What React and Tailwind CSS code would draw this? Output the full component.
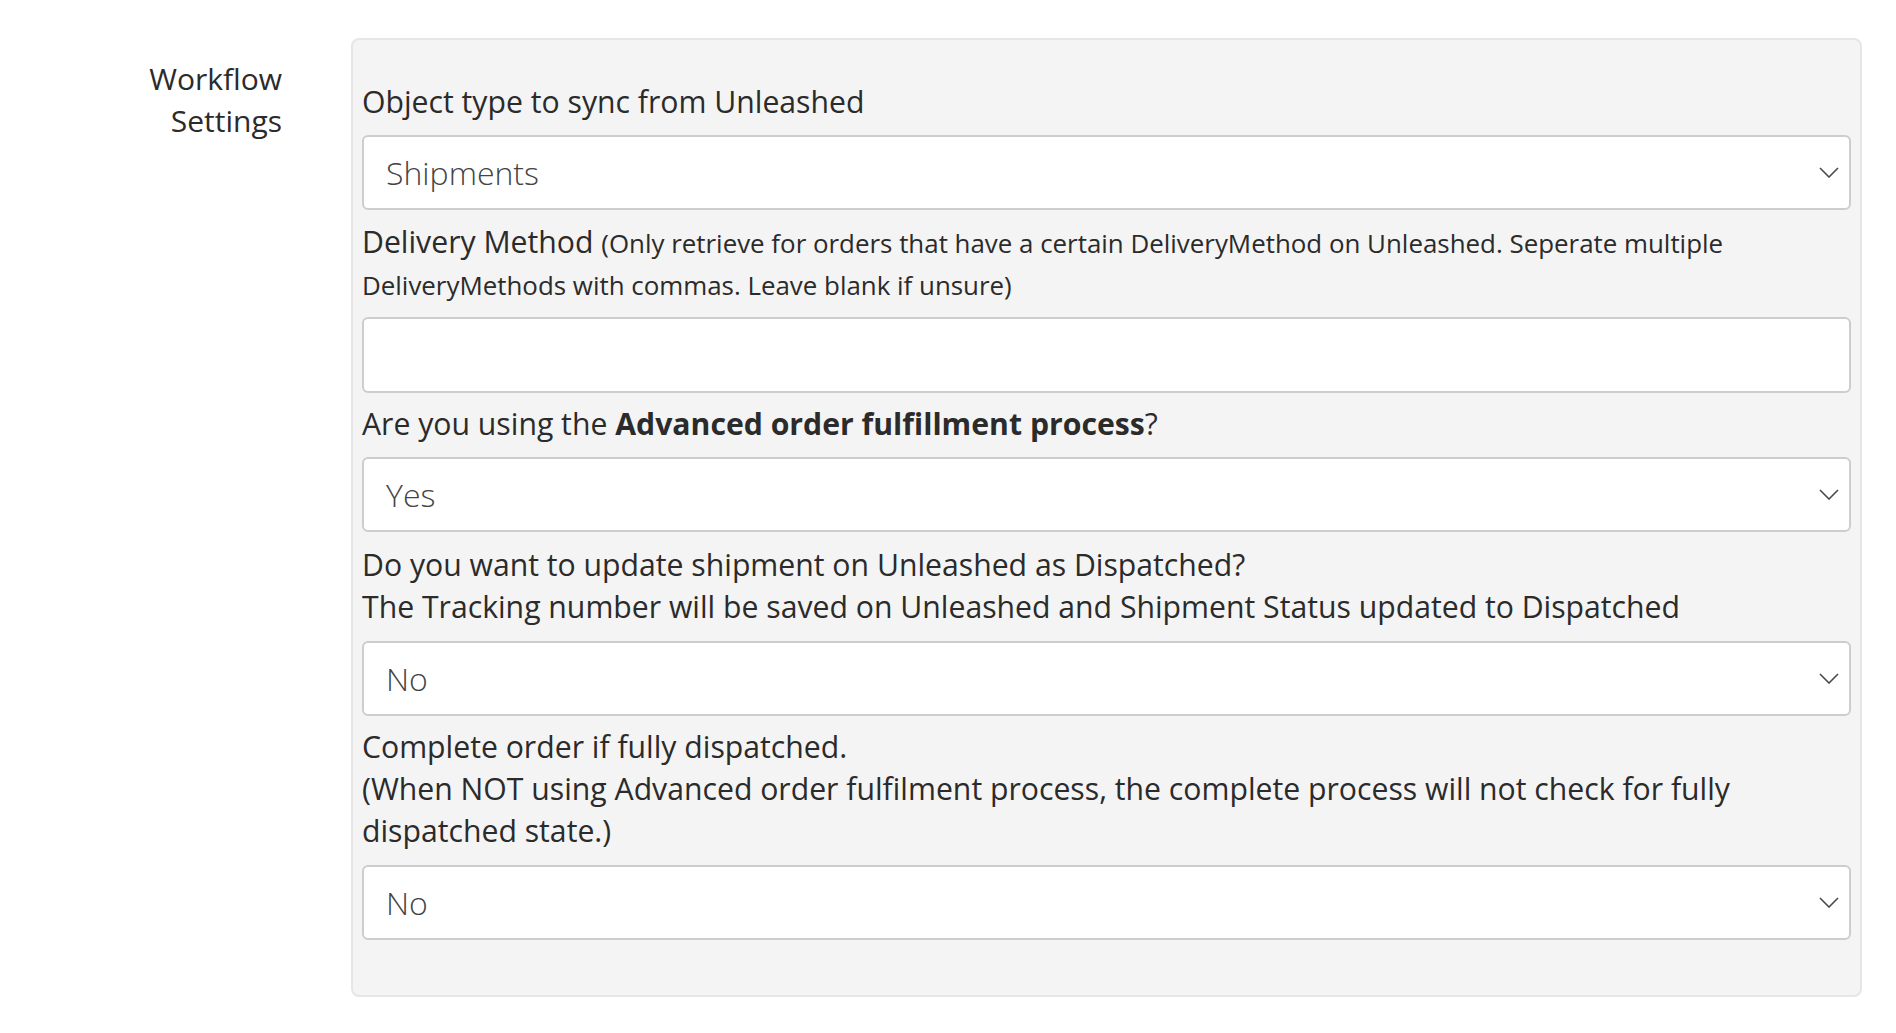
import React from "react";

function Chevron() {
  return (
    <svg width="20" height="11" viewBox="0 0 20 11" fill="none" className="shrink-0">
      <polyline points="1,1 10,10 19,1" stroke="#4a4a4a" strokeWidth="1.6" fill="none" />
    </svg>
  );
}

function Select({ value }) {
  return (
    <div className="flex h-[75px] items-center justify-between rounded-[6px] border-2 border-[#cdcdcd] bg-white pl-[22px] pr-[10px]">
      <span className="text-[32px] font-light text-[#444]">{value}</span>
      <Chevron />
    </div>
  );
}

export default function App() {
  return (
    <div
      className="h-[1033px] w-[1896px] bg-white text-[#2b2b2b]"
      style={{ fontFamily: '"Open Sans", "Noto Sans", sans-serif' }}
    >
      <div className="flex pt-[38px]">
        <div className="w-[282px] shrink-0 pt-[20px] text-right text-[30px] leading-[42px]">
          Workflow
          <br />
          Settings
        </div>
        <div className="ml-[69px] w-[1511px] rounded-[8px] border-2 border-[#e6e6e6] bg-[#f4f4f4] pb-[55px] pl-[9px] pr-[9px] pt-[41px]">
          <div className="text-[30.2px] leading-[42px]">Object type to sync from Unleashed</div>
          <div className="mt-[12px]">
            <Select value="Shipments" />
          </div>
          <div className="mt-[11px] text-[30.2px] leading-[42px]">
            Delivery Method{" "}
            <span className="text-[25.9px] leading-[32px]">
              (Only retrieve for orders that have a certain DeliveryMethod on Unleashed. Seperate multiple
            </span>
            <br />
            <span className="text-[25.9px] leading-[32px]">DeliveryMethods with commas. Leave blank if unsure)</span>
          </div>
          <div className="mt-[12px] h-[76px] rounded-[6px] border-2 border-[#cdcdcd] bg-white"></div>
          <div className="mt-[10px] text-[30.2px] leading-[42px]">
            Are you using the <span className="font-bold">Advanced order fulfillment process</span>?
          </div>
          <div className="mt-[12px]">
            <Select value="Yes" />
          </div>
          <div className="mt-[12px] text-[30.2px] leading-[42px]">
            Do you want to update shipment on Unleashed as Dispatched?
            <br />
            The Tracking number will be saved on Unleashed and Shipment Status updated to Dispatched
          </div>
          <div className="mt-[13px]">
            <Select value="No" />
          </div>
          <div className="mt-[10px] text-[30.2px] leading-[42px]">
            Complete order if fully dispatched.
            <br />
            (When NOT using Advanced order fulfilment process, the complete process will not check for fully
            dispatched state.)
          </div>
          <div className="mt-[13px]">
            <Select value="No" />
          </div>
        </div>
      </div>
    </div>
  );
}
